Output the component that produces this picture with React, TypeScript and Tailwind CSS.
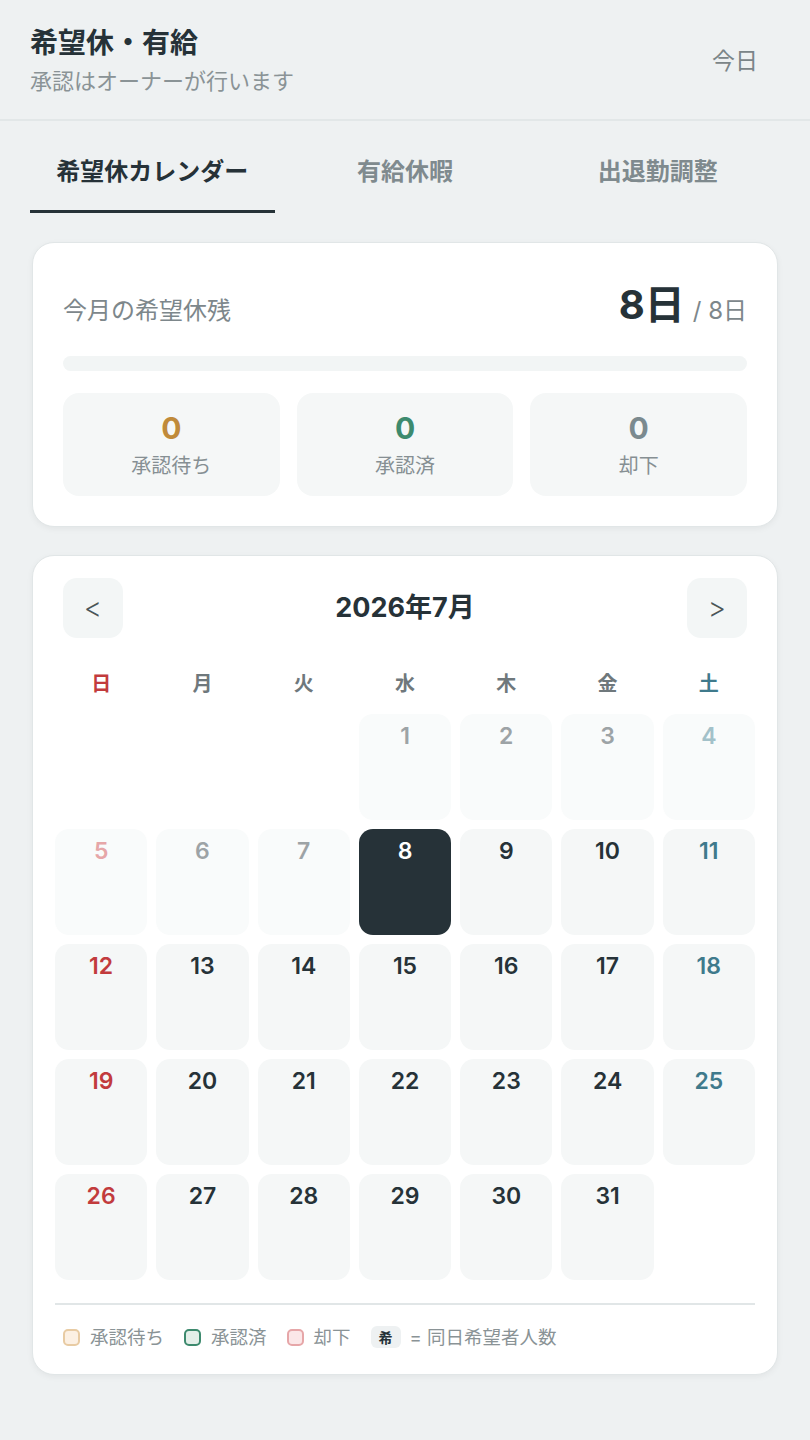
const FONT = { fontFamily: 'Inter, "Noto Sans CJK JP", "Noto Sans", sans-serif' };

type Day = { d: number; past: boolean; today: boolean; dow: number } | null;

function buildDays(): Day[] {
  const days: Day[] = [null, null, null];
  for (let d = 1; d <= 31; d++) {
    const dow = (d + 2) % 7;
    days.push({ d, past: d < 8, today: d === 8, dow });
  }
  while (days.length % 7) days.push(null);
  return days;
}

function dayColor(day: NonNullable<Day>) {
  if (day.today) return "text-white";
  if (day.past) {
    if (day.dow === 0) return "text-[#e6a6a8]";
    if (day.dow === 6) return "text-[#a3c1c9]";
    return "text-[#9da3a6]";
  }
  if (day.dow === 0) return "text-[#c23b3d]";
  if (day.dow === 6) return "text-[#3f7a8c]";
  return "text-[#263238]";
}

function Stat({ value, label, color }: { value: string; label: string; color: string }) {
  return (
    <div className="flex flex-col items-center rounded-[16px] bg-[#f5f7f7] pt-[17px] pb-[17px]">
      <div className={`text-[30px] font-bold leading-[36px] ${color}`}>{value}</div>
      <div className="mt-[7px] text-[20px] leading-[26px] text-[#868f93]">{label}</div>
    </div>
  );
}

function Legend({ box, label }: { box: string; label: string }) {
  return (
    <div className="flex items-center gap-[10px]">
      <span className={`h-[17px] w-[17px] rounded-[5px] border-2 ${box}`} />
      <span className="text-[18.5px] leading-[26px] text-[#8a9396]">{label}</span>
    </div>
  );
}

export default function App() {
  const days = buildDays();
  const weekdays = ["日", "月", "火", "水", "木", "金", "土"];
  return (
    <div style={FONT} className="min-h-[1440px] w-[810px] bg-[#eef1f2] pb-[40px]">
      <header className="flex items-center justify-between border-b-2 border-[#e2e7e8] pl-[30px] pr-[30px] pt-[25px] pb-[23px]">
        <div>
          <div className="text-[28px] font-bold leading-[36px] text-[#263238]">希望休・有給</div>
          <div className="mt-[5px] text-[22px] leading-[30px] text-[#8a9396]">承認はオーナーが行います</div>
        </div>
        <button className="px-[22px] text-[23px] leading-[30px] text-[#7b8588]">今日</button>
      </header>

      <div className="px-[30px]">
        <div className="mt-[16px] grid grid-cols-3 gap-2">
          {["希望休カレンダー", "有給休暇", "出退勤調整"].map((t, i) => (
            <div
              key={t}
              className={`border-b-[3px] pt-[19px] pb-[22px] text-center text-[24px] font-bold leading-[32px] ${
                i === 0 ? "border-[#263238] text-[#263238]" : "border-transparent text-[#7f8a8e]"
              }`}
            >
              {t}
            </div>
          ))}
        </div>

        <section className="mt-[29px] ml-[2px] mr-[2px] rounded-[22px] border border-[#e1e6e7] bg-white px-[30px] pt-[38px] pb-[30px] shadow-[0_2px_6px_rgba(0,0,0,0.05)]">
          <div className="flex items-baseline justify-between">
            <div className="text-[24px] leading-[30px] text-[#7d878b]">今月の希望休残</div>
            <div className="flex items-baseline">
              <span className="text-[40px] font-bold leading-[48px] text-[#263238]">8日</span>
              <span className="ml-[8px] text-[24px] leading-[30px] text-[#7d878b]">/ 8日</span>
            </div>
          </div>
          <div className="mt-[27px] h-[15px] rounded-full bg-[#f2f5f5]" />
          <div className="mt-[22px] grid grid-cols-3 gap-[17px]">
            <Stat value="0" label="承認待ち" color="text-[#c08a3a]" />
            <Stat value="0" label="承認済" color="text-[#3d8a6e]" />
            <Stat value="0" label="却下" color="text-[#7b8a8f]" />
          </div>
        </section>

        <section className="mt-[28px] ml-[2px] mr-[2px] rounded-[22px] border border-[#e1e6e7] bg-white px-[22px] pt-[22px] pb-[24px] shadow-[0_2px_6px_rgba(0,0,0,0.05)]">
          <div className="flex items-center justify-between px-[8px]">
            <button className="flex h-[60px] w-[60px] items-center justify-center rounded-[14px] bg-[#f3f6f6] text-[28px] font-light text-[#4a5558]">&lt;</button>
            <div className="text-[27px] font-bold leading-[36px] text-[#263238]">2026年7月</div>
            <button className="flex h-[60px] w-[60px] items-center justify-center rounded-[14px] bg-[#f3f6f6] text-[28px] font-light text-[#4a5558]">&gt;</button>
          </div>

          <div className="mt-[32px] grid grid-cols-7 gap-x-[9px]">
            {weekdays.map((w, i) => (
              <div
                key={w}
                className={`text-center text-[20px] font-bold leading-[28px] ${
                  i === 0 ? "text-[#c23b3d]" : i === 6 ? "text-[#3f7a8c]" : "text-[#6f787c]"
                }`}
              >
                {w}
              </div>
            ))}
          </div>

          <div className="mt-[16px] grid grid-cols-7 gap-[9px]">
            {days.map((day, i) =>
              day ? (
                <div
                  key={i}
                  className={`h-[106px] rounded-[14px] pt-[8px] text-center text-[23px] font-semibold leading-[28px] ${
                    day.today ? "bg-[#263238]" : day.past ? "bg-[#f9fbfb]" : "bg-[#f5f7f7]"
                  } ${dayColor(day)}`}
                >
                  {day.d}
                </div>
              ) : (
                <div key={i} className="h-[106px]" />
              )
            )}
          </div>

          <div className="mt-[23px] border-t-2 border-[#e1e6e7] px-[8px] pt-[19px]">
            <div className="flex items-center gap-[20px]">
              <Legend box="border-[#e8cba3] bg-[#fcf0e3]" label="承認待ち" />
              <Legend box="border-[#3d8a6e] bg-[#e4efe9]" label="承認済" />
              <Legend box="border-[#e6a6a8] bg-[#fbe7e8]" label="却下" />
              <div className="flex items-center gap-[9px]">
                <span className="flex h-[22px] w-[30px] items-center justify-center rounded-[6px] bg-[#eef1f2] text-[14px] font-bold text-[#263238]">希</span>
                <span className="text-[18.5px] leading-[26px] text-[#8a9396]">= 同日希望者人数</span>
              </div>
            </div>
          </div>
        </section>
      </div>
    </div>
  );
}
